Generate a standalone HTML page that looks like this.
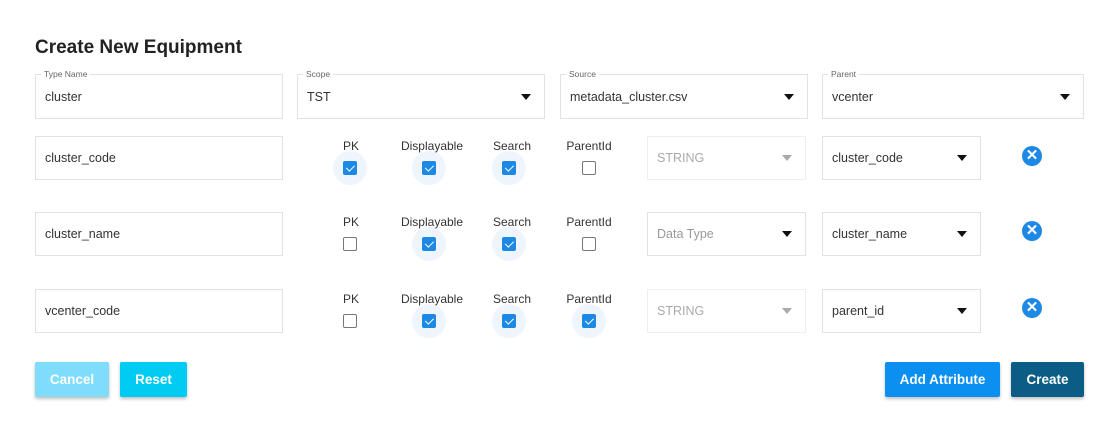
<!DOCTYPE html><html><head><style>
body{margin:0;width:1116px;height:421px;background:#fff;font-family:"Liberation Sans",sans-serif;position:relative;overflow:hidden;color:#222}
.a{position:absolute}
.f{position:absolute;border:1px solid #e2e2e2;box-sizing:border-box;font-size:12.5px;color:#333}
.f span.t{position:absolute;left:9px;top:50%;transform:translateY(-50%)}
.lg{position:absolute;top:-6px;left:5px;background:#fff;padding:0 3px;font-size:8.5px;color:#666}
.ar{position:absolute;right:13px;top:50%;margin-top:-3px;width:0;height:0;border-left:5px solid transparent;border-right:5px solid transparent;border-top:6px solid #111}
.dis{color:#aaa}.dis .ar{border-top-color:#aaa}
.lb{position:absolute;font-size:12px;color:#333;transform:translateX(-50%)}
.h{position:absolute;width:34px;height:34px;border-radius:50%;background:#eef5fd;transform:translate(-50%,-50%)}
.cb{position:absolute;width:14px;height:14px;box-sizing:border-box;border:1.5px solid #777;border-radius:2px;transform:translate(-50%,-50%)}
.ck{border:none;background:#1e88e5}
.ck::after{content:"";position:absolute;left:4.5px;top:1.5px;width:3.5px;height:7px;border:solid #fff;border-width:0 1.6px 1.6px 0;transform:rotate(45deg)}
.x{position:absolute;width:20px;height:20px;border-radius:50%;background:#1e88e5;transform:translate(-50%,-50%);color:#fff;font-size:15px;font-weight:bold;text-align:center;line-height:20px}
.b{position:absolute;top:362px;height:35px;color:#fff;font-size:13.5px;font-weight:bold;text-align:center;line-height:35px;box-shadow:0 2px 3px rgba(0,0,0,.25);border-radius:2px}
</style></head><body>
<div class="a" style="left:35px;top:37px;font-size:19px;font-weight:bold;color:#222">Create New Equipment</div>
<div class="f" style="left:35px;top:74px;width:248px;height:45px"><div class="lg">Type Name</div><span class="t">cluster</span></div>
<div class="f" style="left:297px;top:74px;width:248px;height:45px"><div class="lg">Scope</div><span class="t">TST</span><div class="ar"></div></div>
<div class="f" style="left:560px;top:74px;width:248px;height:45px"><div class="lg">Source</div><span class="t">metadata_cluster.csv</span><div class="ar"></div></div>
<div class="f" style="left:822px;top:74px;width:262px;height:45px"><div class="lg">Parent</div><span class="t">vcenter</span><div class="ar"></div></div>

<!-- row1 -->
<div class="f" style="left:35px;top:136px;width:248px;height:44px"><span class="t">cluster_code</span></div>
<div class="lb" style="left:351px;top:139px">PK</div><div class="lb" style="left:432px;top:139px">Displayable</div><div class="lb" style="left:512px;top:139px">Search</div><div class="lb" style="left:589px;top:139px">ParentId</div>
<div class="h" style="left:350px;top:168px"></div><div class="h" style="left:429px;top:168px"></div><div class="h" style="left:509px;top:168px"></div>
<div class="cb ck" style="left:350px;top:168px"></div><div class="cb ck" style="left:429px;top:168px"></div><div class="cb ck" style="left:509px;top:168px"></div><div class="cb" style="left:589px;top:168px"></div>
<div class="f dis" style="left:647px;top:136px;width:159px;height:44px;border-color:#eee"><span class="t">STRING</span><div class="ar"></div></div>
<div class="f" style="left:822px;top:136px;width:159px;height:44px"><span class="t">cluster_code</span><div class="ar"></div></div>
<div class="x" style="left:1032px;top:156px">✕</div>

<!-- row2 -->
<div class="f" style="left:35px;top:212px;width:248px;height:44px"><span class="t">cluster_name</span></div>
<div class="lb" style="left:351px;top:215px">PK</div><div class="lb" style="left:432px;top:215px">Displayable</div><div class="lb" style="left:512px;top:215px">Search</div><div class="lb" style="left:589px;top:215px">ParentId</div>
<div class="h" style="left:429px;top:244px"></div><div class="h" style="left:509px;top:244px"></div>
<div class="cb" style="left:350px;top:244px"></div><div class="cb ck" style="left:429px;top:244px"></div><div class="cb ck" style="left:509px;top:244px"></div><div class="cb" style="left:589px;top:244px"></div>
<div class="f" style="left:647px;top:212px;width:159px;height:44px"><span class="t" style="color:#999">Data Type</span><div class="ar"></div></div>
<div class="f" style="left:822px;top:212px;width:159px;height:44px"><span class="t">cluster_name</span><div class="ar"></div></div>
<div class="x" style="left:1032px;top:231px">✕</div>

<!-- row3 -->
<div class="f" style="left:35px;top:289px;width:248px;height:44px"><span class="t">vcenter_code</span></div>
<div class="lb" style="left:351px;top:292px">PK</div><div class="lb" style="left:432px;top:292px">Displayable</div><div class="lb" style="left:512px;top:292px">Search</div><div class="lb" style="left:589px;top:292px">ParentId</div>
<div class="h" style="left:429px;top:321px"></div><div class="h" style="left:509px;top:321px"></div><div class="h" style="left:589px;top:321px"></div>
<div class="cb" style="left:350px;top:321px"></div><div class="cb ck" style="left:429px;top:321px"></div><div class="cb ck" style="left:509px;top:321px"></div><div class="cb ck" style="left:589px;top:321px"></div>
<div class="f dis" style="left:647px;top:289px;width:159px;height:44px;border-color:#eee"><span class="t">STRING</span><div class="ar"></div></div>
<div class="f" style="left:822px;top:289px;width:159px;height:44px"><span class="t">parent_id</span><div class="ar"></div></div>
<div class="x" style="left:1032px;top:308px">✕</div>

<div class="b" style="left:35px;width:74px;background:#80dcfb">Cancel</div>
<div class="b" style="left:120px;width:67px;background:#00cbf3">Reset</div>
<div class="b" style="left:885px;width:115px;background:#0b8ff0">Add Attribute</div>
<div class="b" style="left:1011px;width:73px;background:#0b5d85">Create</div>
</body></html>
